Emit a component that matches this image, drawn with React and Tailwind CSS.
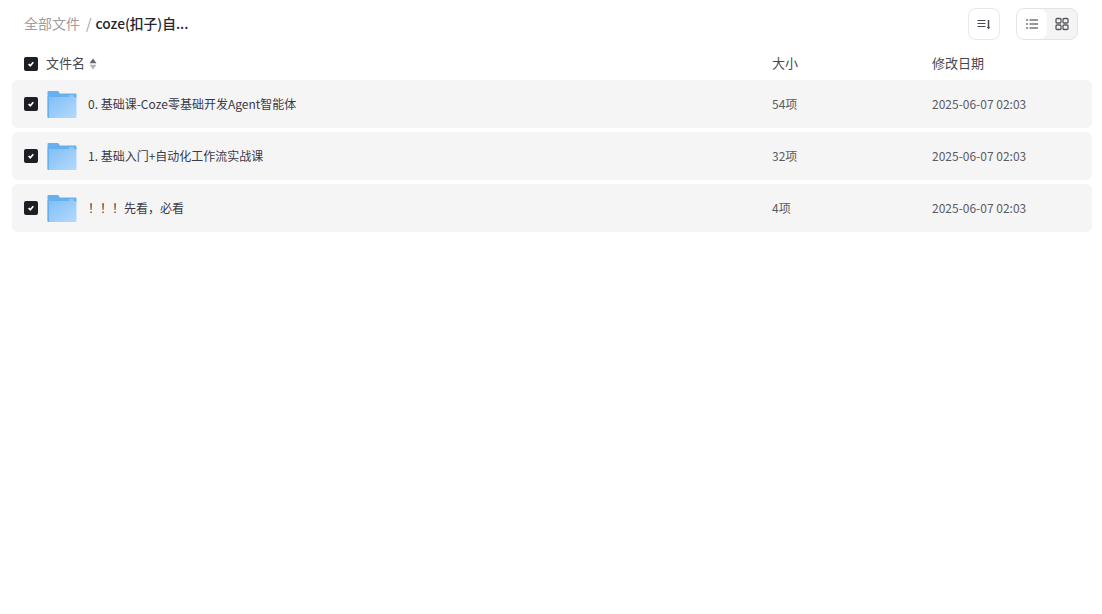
import React from 'react';

const font = { fontFamily: '"Noto Sans CJK SC", sans-serif' };

const files = [
  { id: 1, name: '0. 基础课-Coze零基础开发Agent智能体', size: '54项' },
  { id: 2, name: '1. 基础入门+自动化工作流实战课', size: '32项' },
  { id: 3, name: '！！！先看，必看', size: '4项' },
];

const Checkbox = () => (
  <span className="flex h-[14px] w-[14px] shrink-0 items-center justify-center rounded-[2px] bg-[#1e1e24]">
    <svg width="10" height="10" viewBox="0 0 10 10" fill="none">
      <path d="M2.6 5 4.3 6.7 7.3 3.2" stroke="#fff" strokeWidth="1.7" />
    </svg>
  </span>
);

const FolderIcon = () => (
  <svg width="30" height="30" viewBox="0 0 30 30" className="block shrink-0">
    <defs>
      <linearGradient id="folderFront" x1="0" y1="0" x2="1" y2="1">
        <stop offset="0" stopColor="#7fbef5" />
        <stop offset="1" stopColor="#b5dafd" />
      </linearGradient>
    </defs>
    <path d="M.5 3a1 1 0 0 1 1-1h9.5l2 2.5h15.5a1 1 0 0 1 1 1V9H.5z" fill="#66b0ef" />
    <rect x="22" y="6" width="5" height="2" fill="#8fc6f4" />
    <path d="M.5 8h29v20a1 1 0 0 1-1 1h-27a1 1 0 0 1-1-1z" fill="url(#folderFront)" />
    <path d="M.5 8H2v21h-.5a1 1 0 0 1-1-1z" fill="#66b0ef" />
  </svg>
);

const App = () => {
  return (
    <div className="min-h-screen bg-white pl-3 pr-[10px] text-[#474752]" style={font}>
      <div className="flex h-12 items-center justify-between pl-3 pr-[14px]">
        <div className="flex items-center pb-[2px] text-sm leading-5">
          <span className="text-[#a09ca0]">全部文件</span>
          <span className="ml-[6px] mr-1 text-[#a09ca0]">/</span>
          <span className="text-[13.75px] font-medium text-[#25252f]">coze(扣子)自...</span>
        </div>
        <div className="flex items-center gap-4">
          <button className="flex h-8 w-8 items-center justify-center rounded-lg border border-[#e8e8e8] bg-white">
            <svg width="16" height="16" viewBox="0 0 16 16" fill="none" stroke="#4a4a52" strokeWidth="1.2">
              <path d="M1.5 4.5h8M1.5 7.5h8M1.5 10.5h8" />
              <path d="M12.5 4v8" strokeWidth="1.5" />
              <path d="M10.8 11h3.4l-1.7 2.5z" fill="#4a4a52" stroke="none" />
            </svg>
          </button>
          <div className="flex h-8 w-[62px] overflow-hidden rounded-lg border border-[#e4e4e4] bg-[#f4f4f4]">
            <span className="flex w-[30px] items-center justify-center rounded-r-lg bg-white">
              <svg width="14" height="14" viewBox="0 0 14 14" fill="none" stroke="#33333a" strokeWidth="1.2">
                <path d="M1 3h2M4.5 3H13M1 7h2M4.5 7H13M1 11h2M4.5 11H13" />
              </svg>
            </span>
            <span className="flex flex-1 items-center justify-center">
              <svg width="14" height="14" viewBox="0 0 14 14" fill="none" stroke="#55555c" strokeWidth="1.3">
                <rect x="1" y="1.5" width="5" height="4.5" rx="1" />
                <rect x="8" y="1.5" width="5" height="4.5" rx="1" />
                <rect x="1" y="8" width="5" height="4.5" rx="1" />
                <rect x="8" y="8" width="5" height="4.5" rx="1" />
              </svg>
            </span>
          </div>
        </div>
      </div>

      <div className="flex h-8 items-center text-[13px]">
        <div className="flex w-[760px] items-center pl-3">
          <Checkbox />
          <span className="ml-2 pb-[2px]">文件名</span>
          <svg width="8" height="12" viewBox="0 0 8 12" className="ml-[4px]">
            <path d="M4 .5 7.5 5.2h-7z" fill="#66666c" />
            <path d="M4 11.5 .5 6.8h7z" fill="#b4b4b8" />
          </svg>
        </div>
        <span className="w-40 pb-[2px]">大小</span>
        <span className="pb-[2px]">修改日期</span>
      </div>

      <div className="flex flex-col gap-1">
        {files.map((file) => (
          <div key={file.id} className="flex h-12 items-center rounded-md bg-[#f5f5f5] text-xs">
            <div className="flex w-[760px] items-center pl-3">
              <Checkbox />
              <span className="ml-[9px]"><FolderIcon /></span>
              <span className="ml-[11px] text-[#3a3a48]">{file.name}</span>
            </div>
            <span className="w-40 text-[#5b5b63]">{file.size}</span>
            <span className="text-[#5b5b63]">2025-06-07 02:03</span>
          </div>
        ))}
      </div>
    </div>
  );
};

export default App;
